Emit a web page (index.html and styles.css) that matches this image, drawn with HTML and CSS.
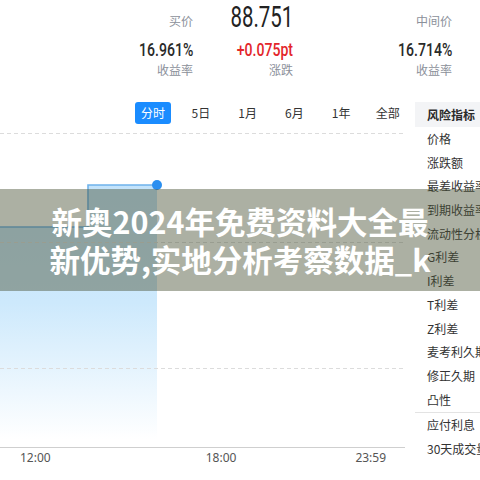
FILE: index.html
```html
<!DOCTYPE html>
<html lang="zh">
<head>
<meta charset="utf-8">
<title>行情</title>
<link rel="stylesheet" href="styles.css">
</head>
<body>
<div class="page">
  <div class="stats">
    <div class="lbl lbl-top">买价</div>
    <div class="big"><span class="cond-big">88.751</span></div>
    <div class="lbl lbl-top">中间价</div>
    <div class="num"><span class="cond">16.961%</span></div>
    <div class="num red"><span class="cond">+0.075pt</span></div>
    <div class="num"><span class="cond">16.714%</span></div>
    <div class="lbl">收益率</div>
    <div class="lbl">涨跌</div>
    <div class="lbl">收益率</div>
  </div>
  <div class="body">
    <div class="main">
      <div class="tabs">
        <span class="tab active">分时</span>
        <span class="tab first">5日</span>
        <span class="tab">1月</span>
        <span class="tab">6月</span>
        <span class="tab">1年</span>
        <span class="tab">全部</span>
      </div>
      <svg class="chart" width="405" height="326" viewBox="0 0 405 326">
        <defs>
          <linearGradient id="fillg" x1="0" y1="61" x2="0" y2="323" gradientUnits="userSpaceOnUse">
            <stop offset="0" stop-color="#c3e3fb"/>
            <stop offset="0.45" stop-color="#cde9fc"/>
            <stop offset="0.97" stop-color="#ffffff"/>
          </linearGradient>
        </defs>
        <polygon points="0,103 88,103 88,61 157,61 157,323 0,323" fill="url(#fillg)"/>
        <line x1="0" y1="9.5" x2="405" y2="9.5" stroke="#dcdcdc" stroke-width="1" stroke-dasharray="4,3"/>
        <line x1="0" y1="118.5" x2="405" y2="118.5" stroke="#dcdcdc" stroke-width="1" stroke-dasharray="4,3"/>
        <line x1="0" y1="244.5" x2="405" y2="244.5" stroke="#dcdcdc" stroke-width="1" stroke-dasharray="4,3"/>
        <line x1="0" y1="323.5" x2="406" y2="323.5" stroke="#cfcfcf" stroke-width="1.2"/>
        <polyline points="0,103 88,103 88,61 157,61" fill="none" stroke="#6fb3ec" stroke-width="1.6"/>
        <circle cx="157" cy="61" r="5" fill="#2b8ff0"/>
      </svg>
      <div class="axis">
        <span class="t t1">12:00</span>
        <span class="t t2">18:00</span>
        <span class="t t3">23:59</span>
      </div>
    </div>
    <div class="panel">
      <div class="ph">风险指标</div>
      <div class="pi">价格</div>
      <div class="pi">涨跌额</div>
      <div class="pi">最差收益率</div>
      <div class="pi">到期收益率</div>
      <div class="pi">流动性分析</div>
      <div class="pi">G利差</div>
      <div class="pi">I利差</div>
      <div class="pi">T利差</div>
      <div class="pi">Z利差</div>
      <div class="pi">麦考利久期</div>
      <div class="pi">修正久期</div>
      <div class="pi">凸性</div>
      <div class="pi sep">应付利息</div>
      <div class="pi">30天成交量</div>
    </div>
  </div>
  <div class="banner">新奥2024年免费资料大全最<br>新优势,实地分析考察数据_k</div>
</div>
</body>
</html>
```
FILE: styles.css
```css
html, body {
  margin: 0;
  padding: 0;
  background: #ffffff;
}
body {
  font-family: "Noto Sans CJK SC", "Noto Sans", sans-serif;
  color: #333333;
}
.page {
  position: relative;
  width: 480px;
  height: 480px;
  overflow: hidden;
}
.stats {
  display: grid;
  grid-template-columns: 193px 100px 159px;
  grid-template-rows: 36px 28px 16px;
  height: 80px;
}
.stats > div {
  text-align: right;
  white-space: nowrap;
}
.lbl {
  font-size: 12px;
  line-height: 12px;
  color: #8b909a;
}
.lbl-top {
  padding-top: 14px;
  line-height: 14px;
}
.big {
  font-family: Roboto, "Liberation Sans", sans-serif;
  font-size: 30px;
  line-height: 33px;
  color: #222222;
}
.cond-big {
  display: inline-block;
  transform: scaleX(0.68);
  transform-origin: right center;
}
.num {
  font-family: Roboto, "Liberation Sans", sans-serif;
  font-size: 19px;
  font-weight: 500;
  line-height: 28px;
  color: #2a2a2a;
}
.num.red {
  color: #e3262b;
}
.cond {
  display: inline-block;
  transform: scaleX(0.74);
  transform-origin: right center;
}
.body {
  display: flex;
  margin-top: 22px;
}
.main {
  width: 415px;
  flex: none;
}
.tabs {
  display: flex;
  align-items: center;
  height: 22px;
  padding-left: 135px;
  font-size: 12px;
}
.tab {
  width: 46.75px;
  text-align: center;
  color: #333333;
  line-height: 22px;
}
.tab.first {
  margin-left: 6.5px;
}
.tab.active {
  width: 36px;
  background: #1a8cff;
  color: #ffffff;
  border-radius: 3px;
}
.chart {
  display: block;
}
.axis {
  display: flex;
  height: 16px;
  font-family: "Noto Sans", "Open Sans", sans-serif;
  font-size: 12px;
  line-height: 16px;
  color: #555555;
}
.t1 { margin-left: 20px; }
.t2 { margin-left: 155px; }
.t3 { margin-left: 119px; }
.panel {
  width: 65px;
  flex: none;
  overflow: hidden;
  white-space: nowrap;
  font-size: 12px;
}
.ph {
  height: 25px;
  line-height: 25px;
  padding-left: 12px;
  background: #f3f4f6;
  font-weight: bold;
  color: #2b2b2b;
}
.pi {
  height: 23.7px;
  line-height: 23.7px;
  padding-left: 12px;
  color: #333333;
}
.pi.sep {
  border-top: 1px solid #e3e3e3;
  margin-top: 1px;
}
.banner {
  position: absolute;
  left: 0;
  top: 189px;
  width: 480px;
  height: 102px;
  box-sizing: border-box;
  padding-top: 13px;
  background: rgba(70, 80, 50, 0.45);
  color: #ffffff;
  font-family: "Noto Sans CJK SC", sans-serif;
  font-weight: bold;
  font-size: 30.5px;
  line-height: 38px;
  text-align: center;
  white-space: nowrap;
}
```
